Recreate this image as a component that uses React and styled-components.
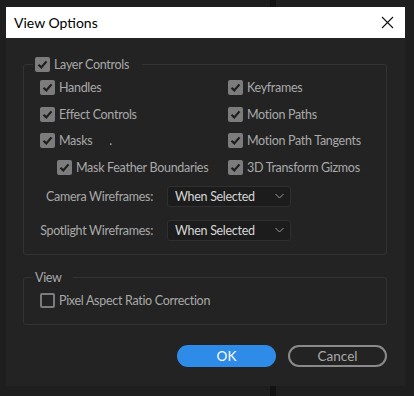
import React from "react";
import styled, { createGlobalStyle } from "styled-components";

const Global = createGlobalStyle`
  html, body { margin: 0; padding: 0; background: #1d1d1d; }
  body { width: 414px; height: 396px; overflow: hidden; }
  * { box-sizing: border-box; }
`;

const Page = styled.div`
  width: 414px;
  height: 396px;
  padding: 7px 9px 0 6px;
  font-family: Lato, "Noto Sans", sans-serif;
  background:
    linear-gradient(to right, transparent 270px, #121212 270px, #121212 276px, transparent 276px),
    #1e1e1e;
`;

const Dialog = styled.div`
  width: 399px;
  height: 379px;
  background: #232323;
  display: flex;
  flex-direction: column;
`;

const TitleBar = styled.div`
  height: 31px;
  background: #ffffff;
  display: flex;
  align-items: center;
  justify-content: space-between;
  padding: 0 10px 0 8px;
`;

const Title = styled.div`
  font-family: Lato, "Noto Sans", sans-serif;
  font-size: 14px;
  color: #000;
`;

const CloseBtn = styled.div`
  width: 14px;
  height: 14px;
  display: flex;
  align-items: center;
  justify-content: center;
  margin-right: 1px;
`;

const Body = styled.div`
  flex: 1;
  display: flex;
  flex-direction: column;
  padding: 18px 18px 0 17px;
`;

const Group = styled.fieldset`
  margin: ${(p) => p.$mt || 0}px 0 0 0;
  border: 1px solid #333333;
  border-radius: 3px;
  padding: 0;
  min-width: 0;
`;

const Inner = styled.div`
  padding: ${(p) => p.$pad};
`;

const Legend = styled.legend`
  padding: 0 ${(p) => p.$pr}px 0 2px;
  margin-left: 9px;
  display: flex;
  align-items: center;
  gap: 4px;
  font-size: 12.5px;
  letter-spacing: -0.3px;
  color: #a9a9a9;
  height: 16px;
`;

const Grid = styled.div`
  display: grid;
  grid-template-columns: 188px 1fr;
  grid-auto-rows: 26.7px;
  align-items: center;
`;

const Item = styled.label`
  display: flex;
  align-items: center;
  gap: 4px;
  font-size: 12.5px;
  letter-spacing: -0.3px;
  color: #a9a9a9;
  padding-left: ${(p) => p.$indent || 0}px;
  white-space: nowrap;
`;

const Box = styled.span`
  width: 15px;
  height: 15px;
  border-radius: 2px;
  flex: none;
  display: flex;
  align-items: center;
  justify-content: center;
  background: ${(p) => (p.$checked ? "#7c7c7c" : "transparent")};
  border: ${(p) => (p.$checked ? "none" : "2px solid #7c7c7c")};
`;

const Dot = styled.span`
  margin-left: 13px;
  color: #a9a9a9;
`;

const SelectRow = styled.div`
  display: grid;
  grid-template-columns: 113px 124px;
  column-gap: 14px;
  align-items: center;
  margin-top: ${(p) => p.$mt}px;
`;

const SelectLabel = styled.div`
  text-align: right;
  font-size: 12.5px;
  letter-spacing: -0.3px;
  color: #a9a9a9;
  white-space: nowrap;
`;

const Select = styled.div`
  height: 21px;
  border: 1px solid #2f2f2f;
  border-radius: 3px;
  background: #1c1c1c;
  display: flex;
  align-items: center;
  justify-content: space-between;
  padding: 0 6px 0 7px;
  font-size: 12.5px;
  letter-spacing: -0.3px;
  color: #d6d6d6;
`;

const Buttons = styled.div`
  display: flex;
  justify-content: flex-end;
  gap: 12px;
  margin-top: ${(p) => p.$mt}px;
`;

const Button = styled.button`
  width: 99px;
  height: 22px;
  border-radius: 11px;
  font-family: Lato, "Noto Sans", sans-serif;
  font-size: 13.5px;
  padding: 0;
  background: ${(p) => (p.$primary ? "#2e8be8" : "transparent")};
  color: ${(p) => (p.$primary ? "#ffffff" : "#a9a9a9")};
  border: ${(p) => (p.$primary ? "none" : "2px solid #8a8a8a")};
`;

const Check = ({ checked = true }) => (
  <Box $checked={checked}>
    {checked && (
      <svg width="11" height="11" viewBox="0 0 11 11">
        <path d="M1.5 5.8 L4.3 8.4 L9.5 2.4" fill="none" stroke="#1e1e1e" strokeWidth="2.2" />
      </svg>
    )}
  </Box>
);

const Chevron = () => (
  <svg width="9" height="6" viewBox="0 0 9 6">
    <path d="M0.5 1 L4.5 5 L8.5 1" fill="none" stroke="#9a9a9a" strokeWidth="1" />
  </svg>
);

export default function App() {
  return (
    <Page>
      <Global />
      <Dialog>
        <TitleBar>
          <Title>View Options</Title>
          <CloseBtn>
            <svg width="13" height="13" viewBox="0 0 13 13">
              <path d="M1 1 L12 12 M12 1 L1 12" stroke="#111" strokeWidth="1.1" />
            </svg>
          </CloseBtn>
        </TitleBar>
        <Body>
          <Group>
            <Legend $pr={13}>
              <Check />
              Layer Controls
            </Legend>
            <Inner $pad="2px 0 13px 16px">
              <Grid>
                <Item><Check />Handles</Item>
                <Item><Check />Keyframes</Item>
                <Item><Check />Effect Controls</Item>
                <Item><Check />Motion Paths</Item>
                <Item><Check />Masks<Dot>.</Dot></Item>
                <Item><Check />Motion Path Tangents</Item>
                <Item $indent={17}><Check />Mask Feather Boundaries</Item>
                <Item><Check />3D Transform Gizmos</Item>
              </Grid>
              <SelectRow $mt={5}>
                <SelectLabel>Camera Wireframes:</SelectLabel>
                <Select>When Selected<Chevron /></Select>
              </SelectRow>
              <SelectRow $mt={13}>
                <SelectLabel>Spotlight Wireframes:</SelectLabel>
                <Select>When Selected<Chevron /></Select>
              </SelectRow>
            </Inner>
          </Group>
          <Group $mt={15}>
            <Legend $pr={11}>View</Legend>
            <Inner $pad="7px 0 16px 16px">
              <Item><Check checked={false} />Pixel Aspect Ratio Correction</Item>
            </Inner>
          </Group>
          <Buttons $mt={20}>
            <Button $primary>OK</Button>
            <Button>Cancel</Button>
          </Buttons>
        </Body>
      </Dialog>
    </Page>
  );
}
